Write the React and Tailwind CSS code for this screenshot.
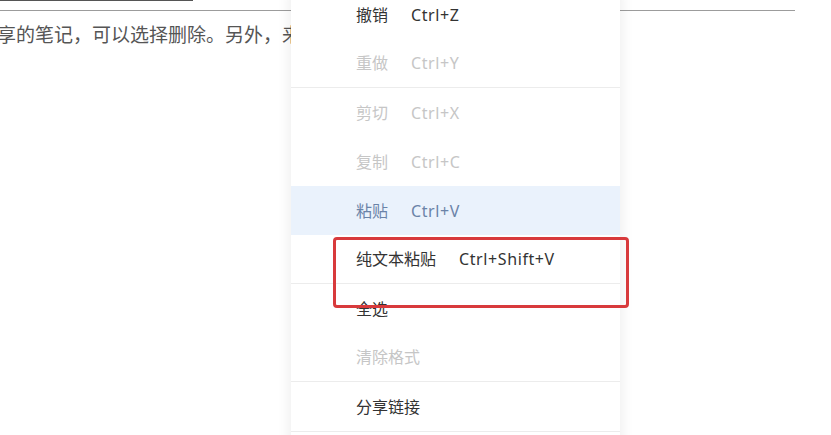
import React from 'react';

const items = [
  { label: '撤销', key: 'Ctrl+Z' },
  { label: '重做', key: 'Ctrl+Y', disabled: true, sep: true },
  { label: '剪切', key: 'Ctrl+X', disabled: true },
  { label: '复制', key: 'Ctrl+C', disabled: true },
  { label: '粘贴', key: 'Ctrl+V', active: true },
  { label: '纯文本粘贴', key: 'Ctrl+Shift+V', sep: true },
  { label: '全选' },
  { label: '清除格式', disabled: true, sep: true },
  { label: '分享链接', sep: true, last: true },
];

function MenuItem({ item }) {
  let color = 'text-[#333333]';
  if (item.disabled) color = 'text-[#c6c6c6]';
  if (item.active) color = 'text-[#6a83a8]';
  return (
    <div
      className={`flex items-center pl-[65px] ${item.last ? 'h-[50px]' : 'h-[49px]'} ${
        item.sep ? 'border-b border-[#ececec]' : ''
      } ${item.active ? 'bg-[#eaf2fc]' : ''} ${color}`}
    >
      <span>{item.label}</span>
      {item.key && <span className="ml-[23px] tracking-[0.6px]">{item.key}</span>}
    </div>
  );
}

export default function App() {
  return (
    <div
      className="relative w-[831px] h-[435px] overflow-hidden bg-white"
      style={{ fontFamily: '"Noto Sans", "Noto Sans CJK SC", sans-serif' }}
    >
      <div className="w-[193px] h-[1px] bg-[#555555]" />
      <div className="mt-[9px] w-[795px] h-[1px] bg-[#9c9c9c]" />
      <div className="mt-[13px] -ml-[3px] w-[300px] overflow-hidden whitespace-nowrap text-[19px] leading-[22px] text-[#555555]">
        享的笔记，可以选择删除。另外，来自他人分享的笔记
      </div>

      <div className="absolute left-[291px] top-[-10px] w-[329px] pb-[20px] bg-white text-[16px] shadow-[0_0_14px_rgba(0,0,0,0.09)]">
        {items.map((item) => (
          <MenuItem key={item.label} item={item} />
        ))}
      </div>

      <div className="absolute left-[333px] top-[237px] w-[296px] h-[71px] rounded-[4px] border-[3px] border-[#d83a3c]" />
    </div>
  );
}
